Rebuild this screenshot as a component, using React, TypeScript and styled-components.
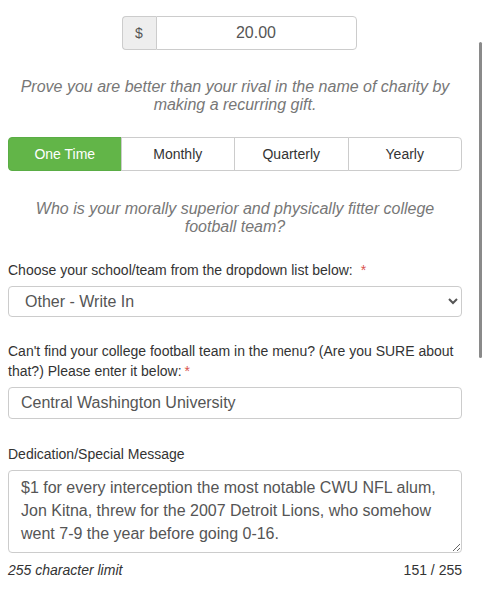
import { useState } from "react";
import styled, { createGlobalStyle } from "styled-components";

const GlobalStyle = createGlobalStyle`
  html, body {
    margin: 0;
    padding: 0;
    background: #fff;
    overflow: hidden;
  }
  body {
    font-family: "Liberation Sans", Arial, sans-serif;
    color: #333;
  }
  * { box-sizing: border-box; }
`;

const Page = styled.div(() => ({
  position: "relative",
  width: 483,
  height: 614,
  padding: "16px 0 0 8px",
}));

const Form = styled.div(() => ({
  width: 454,
  display: "flex",
  flexDirection: "column",
}));

const ScrollThumb = styled.div(() => ({
  position: "absolute",
  top: 42,
  right: 1,
  width: 3,
  height: 316,
  borderRadius: 2,
  backgroundColor: "#8a8a8a",
}));

const AmountGroup = styled.div(() => ({
  alignSelf: "center",
  display: "flex",
  width: 235,
  height: 34,
  marginLeft: 8,
}));

const Addon = styled.span(() => ({
  width: 34,
  display: "flex",
  alignItems: "center",
  justifyContent: "center",
  backgroundColor: "#eee",
  border: "1px solid #ccc",
  borderRight: "none",
  borderRadius: "4px 0 0 4px",
  color: "#555",
  fontSize: 14,
}));

const AmountInput = styled.input(() => ({
  flex: 1,
  minWidth: 0,
  border: "1px solid #ccc",
  borderRadius: "0 4px 4px 0",
  textAlign: "center",
  fontFamily: "inherit",
  fontSize: 16,
  color: "#555",
  padding: "0 12px",
  outline: "none",
}));

const Lead = styled.p<{ $top: number }>((p) => ({
  margin: `${p.$top}px 0 0`,
  padding: "0 10px",
  textAlign: "center",
  fontStyle: "italic",
  fontSize: 16,
  lineHeight: "18px",
  color: "#777",
}));

const Frequency = styled.div(() => ({
  marginTop: 23,
  display: "grid",
  gridTemplateColumns: "repeat(4, 1fr)",
  height: 34,
}));

const FreqButton = styled.button<{ $active: boolean }>((p) => ({
  fontFamily: "inherit",
  fontSize: 14,
  border: "1px solid",
  borderColor: p.$active ? "#5aad45" : "#ccc",
  marginLeft: -1,
  backgroundColor: p.$active ? "#62b548" : "#fff",
  color: p.$active ? "#fff" : "#333",
  cursor: "pointer",
  padding: 0,
  "&:first-child": { marginLeft: 0, borderRadius: "4px 0 0 4px" },
  "&:last-child": { borderRadius: "0 4px 4px 0" },
}));

const Field = styled.div<{ $top: number }>((p) => ({
  marginTop: p.$top,
  display: "flex",
  flexDirection: "column",
}));

const Label = styled.label(() => ({
  fontSize: 14,
  lineHeight: "20px",
  color: "#333",
  marginBottom: 6,
}));

const Required = styled.span<{ $gap: number }>((p) => ({
  color: "#d9534f",
  marginLeft: p.$gap,
}));

const Select = styled.select(() => ({
  height: 31,
  width: "100%",
  border: "1px solid #ccc",
  borderRadius: 4,
  backgroundColor: "#fff",
  fontFamily: "inherit",
  fontSize: 16,
  color: "#555",
  padding: "0 12px",
  outline: "none",
}));

const TextInput = styled.input(() => ({
  height: 32,
  width: "100%",
  border: "1px solid #ccc",
  borderRadius: 4,
  fontFamily: "inherit",
  fontSize: 16,
  color: "#555",
  padding: "0 12px",
  outline: "none",
}));

const TextArea = styled.textarea(() => ({
  height: 83,
  width: "100%",
  border: "1px solid #ccc",
  borderRadius: 4,
  fontFamily: "inherit",
  fontSize: 16,
  lineHeight: "23px",
  color: "#555",
  padding: "5px 12px",
  outline: "none",
  resize: "vertical",
  overflow: "hidden",
}));

const Counter = styled.div(() => ({
  display: "flex",
  justifyContent: "space-between",
  marginTop: 8,
  fontSize: 14,
  lineHeight: "18px",
  color: "#333",
}));

const Hint = styled.span(() => ({
  fontStyle: "italic",
}));

const options = ["One Time", "Monthly", "Quarterly", "Yearly"];

const App = () => {
  const [frequency, setFrequency] = useState("One Time");

  return (
    <Page>
      <GlobalStyle />
      <Form>
        <AmountGroup>
          <Addon>$</Addon>
          <AmountInput defaultValue="20.00" />
        </AmountGroup>

        <Lead $top={28}>
          Prove you are better than your rival in the name of charity by making a recurring gift.
        </Lead>

        <Frequency>
          {options.map((o) => (
            <FreqButton key={o} $active={frequency === o} onClick={() => setFrequency(o)}>
              {o}
            </FreqButton>
          ))}
        </Frequency>

        <Lead $top={29}>
          Who is your morally superior and physically fitter college football team?
        </Lead>

        <Field $top={24}>
          <Label>
            Choose your school/team from the dropdown list below: <Required $gap={4}>*</Required>
          </Label>
          <Select defaultValue="other">
            <option value="other">Other - Write In</option>
          </Select>
        </Field>

        <Field $top={24}>
          <Label>
            Can't find your college football team in the menu? (Are you SURE about that?) Please enter it below:<Required $gap={3}>*</Required>
          </Label>
          <TextInput defaultValue="Central Washington University" />
        </Field>

        <Field $top={25}>
          <Label>Dedication/Special Message</Label>
          <TextArea defaultValue="$1 for every interception the most notable CWU NFL alum, Jon Kitna, threw for the 2007 Detroit Lions, who somehow went 7-9 the year before going 0-16." />
          <Counter>
            <Hint>255 character limit</Hint>
            <span>151 / 255</span>
          </Counter>
        </Field>
      </Form>
      <ScrollThumb />
    </Page>
  );
};

export default App;
